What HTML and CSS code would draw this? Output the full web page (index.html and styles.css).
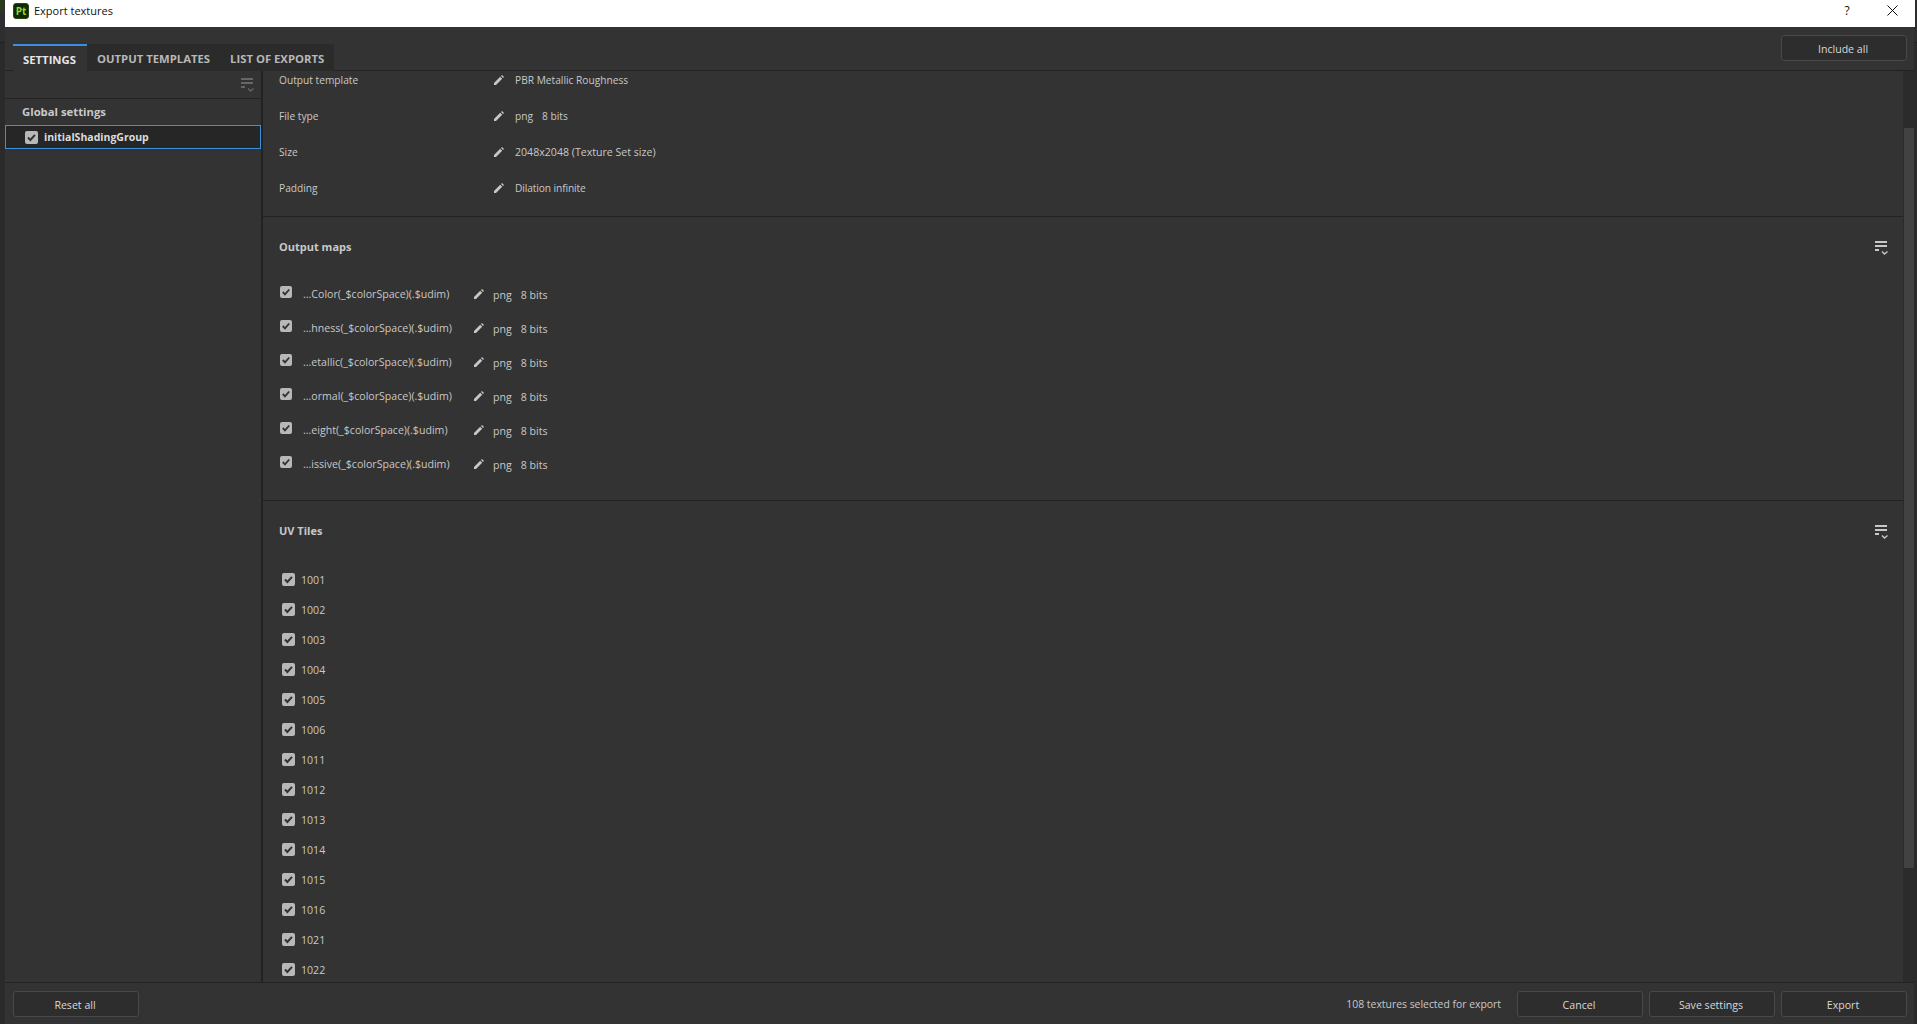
FILE: index.html
```html
<!DOCTYPE html>
<html lang="en">
<head>
<meta charset="utf-8">
<title>Export textures</title>
<link rel="stylesheet" href="styles.css">
</head>
<body>
<svg width="0" height="0" class="defs">
  <symbol id="pencil" viewBox="0 0 10 10"><path d="M0 10V8L6.2 1.8 8.2 3.8 2 10ZM7 1 8 0 10 2 9 3Z" fill="#c8c8c8"/></symbol>
  <symbol id="check" viewBox="0 0 13 13"><path d="M3 6.5 5.4 9 10 3.8" fill="none" stroke="#333" stroke-width="2"/></symbol>
  <symbol id="filter" viewBox="0 0 14 14"><path d="M0 0H12V2H0ZM0 4H12V6H0ZM0 8H4V10H0Z" fill="currentColor"/><path d="M7 10.5 9.5 13 12.5 10.5" fill="none" stroke="currentColor" stroke-width="1.4"/></symbol>
</svg>
<div class="edge-mark"></div>
<div class="window">
  <header class="titlebar">
    <div class="logo">Pt</div>
    <div class="title">Export textures</div>
    <div class="help">?</div>
    <svg class="close" width="11" height="11" viewBox="0 0 11 11"><path d="M.5.5 10.5 10.5M10.5.5.5 10.5" stroke="#111" fill="none"/></svg>
  </header>
  <div class="tabbar">
    <div class="tabs">
      <div class="tab active">SETTINGS</div>
      <div class="tab">OUTPUT TEMPLATES</div>
      <div class="tab">LIST OF EXPORTS</div>
    </div>
    <button class="btn include">Include all</button>
  </div>
  <div class="main">
    <aside class="sidebar">
      <div class="side-tools"><svg class="filter dim"><use href="#filter"/></svg></div>
      <div class="global">Global settings</div>
      <div class="set-row"><span class="cb"><svg><use href="#check"/></svg></span><span>initialShadingGroup</span></div>
    </aside>
    <section class="content">
      <div class="scroll-area">
        <div class="general">
          <div class="prop"><span class="prop-label">Output template</span><svg class="pencil"><use href="#pencil"/></svg><span>PBR Metallic Roughness</span></div>
          <div class="prop"><span class="prop-label">File type</span><svg class="pencil"><use href="#pencil"/></svg><span>png</span><span class="bits">8 bits</span></div>
          <div class="prop"><span class="prop-label">Size</span><svg class="pencil"><use href="#pencil"/></svg><span class="wide">2048x2048 (Texture Set size)</span></div>
          <div class="prop"><span class="prop-label">Padding</span><svg class="pencil"><use href="#pencil"/></svg><span class="tight">Dilation infinite</span></div>
        </div>
        <div class="block maps">
          <div class="block-head"><h2>Output maps</h2><svg class="filter"><use href="#filter"/></svg></div>
          <div class="map"><span class="cb small"><svg><use href="#check"/></svg></span><span class="map-name">...Color(_$colorSpace)(.$udim)</span><svg class="pencil"><use href="#pencil"/></svg><span class="low">png</span><span class="bits low">8 bits</span></div>
          <div class="map"><span class="cb small"><svg><use href="#check"/></svg></span><span class="map-name">...hness(_$colorSpace)(.$udim)</span><svg class="pencil"><use href="#pencil"/></svg><span class="low">png</span><span class="bits low">8 bits</span></div>
          <div class="map"><span class="cb small"><svg><use href="#check"/></svg></span><span class="map-name">...etallic(_$colorSpace)(.$udim)</span><svg class="pencil"><use href="#pencil"/></svg><span class="low">png</span><span class="bits low">8 bits</span></div>
          <div class="map"><span class="cb small"><svg><use href="#check"/></svg></span><span class="map-name">...ormal(_$colorSpace)(.$udim)</span><svg class="pencil"><use href="#pencil"/></svg><span class="low">png</span><span class="bits low">8 bits</span></div>
          <div class="map"><span class="cb small"><svg><use href="#check"/></svg></span><span class="map-name">...eight(_$colorSpace)(.$udim)</span><svg class="pencil"><use href="#pencil"/></svg><span class="low">png</span><span class="bits low">8 bits</span></div>
          <div class="map"><span class="cb small"><svg><use href="#check"/></svg></span><span class="map-name">...issive(_$colorSpace)(.$udim)</span><svg class="pencil"><use href="#pencil"/></svg><span class="low">png</span><span class="bits low">8 bits</span></div>
        </div>
        <div class="block tiles">
          <div class="block-head"><h2>UV Tiles</h2><svg class="filter"><use href="#filter"/></svg></div>
          <div class="tile"><span class="cb"><svg><use href="#check"/></svg></span><span>1001</span></div>
          <div class="tile"><span class="cb"><svg><use href="#check"/></svg></span><span>1002</span></div>
          <div class="tile"><span class="cb"><svg><use href="#check"/></svg></span><span>1003</span></div>
          <div class="tile"><span class="cb"><svg><use href="#check"/></svg></span><span>1004</span></div>
          <div class="tile"><span class="cb"><svg><use href="#check"/></svg></span><span>1005</span></div>
          <div class="tile"><span class="cb"><svg><use href="#check"/></svg></span><span>1006</span></div>
          <div class="tile"><span class="cb"><svg><use href="#check"/></svg></span><span>1011</span></div>
          <div class="tile"><span class="cb"><svg><use href="#check"/></svg></span><span>1012</span></div>
          <div class="tile"><span class="cb"><svg><use href="#check"/></svg></span><span>1013</span></div>
          <div class="tile"><span class="cb"><svg><use href="#check"/></svg></span><span>1014</span></div>
          <div class="tile"><span class="cb"><svg><use href="#check"/></svg></span><span>1015</span></div>
          <div class="tile"><span class="cb"><svg><use href="#check"/></svg></span><span>1016</span></div>
          <div class="tile"><span class="cb"><svg><use href="#check"/></svg></span><span>1021</span></div>
          <div class="tile"><span class="cb"><svg><use href="#check"/></svg></span><span>1022</span></div>
        </div>
      </div>
      <div class="scrollbar"><div class="thumb"></div></div>
    </section>
  </div>
  <footer class="footer">
    <button class="btn">Reset all</button>
    <span class="status">108 textures selected for export</span>
    <button class="btn">Cancel</button>
    <button class="btn">Save settings</button>
    <button class="btn">Export</button>
  </footer>
</div>
</body>
</html>
```
FILE: styles.css
```css
* { box-sizing: border-box; }
html, body { margin: 0; height: 100%; overflow: hidden; }
body { background: linear-gradient(#2e2e2e 42px, #1f1f1f 42px, #1f1f1f 43px, #2a2a2a 43px); font: 10.4px/14px "Open Sans", "Noto Sans", sans-serif; color: #c8c8c8; padding: 0 3px 0 5px; }
.defs { position: absolute; }
.edge-mark { position: absolute; left: 0; top: 0; width: 4px; height: 12px; background: #2a3a1a; }
.window { height: 1024px; display: flex; flex-direction: column; background: #333; }
.titlebar { height: 27px; flex: none; background: #fff; color: #111; display: flex; align-items: flex-start; padding: 3px 0 0 8px; font-size: 11px; margin-right: -1px; }
.logo { width: 16px; height: 16px; border-radius: 3px; background: #0f2a04; border: 1px solid #2c4a10; color: #8fdc2e; font: 700 10px/14px "Open Sans", sans-serif; text-align: center; margin-right: 5px; }
.title { flex: 1; line-height: 16px; }
.help { font-size: 12px; line-height: 16px; width: 12px; text-align: center; margin-right: 34px; }
.close { margin: 2px 17px 0 0; }
.tabbar { height: 44px; flex: none; display: flex; align-items: flex-end; justify-content: space-between; padding: 0 7px 0 8px; border-bottom: 1px solid #222; position: relative; }
.tabs { display: flex; height: 27px; background: #2b2b2b; margin-bottom: -1px; }
.tab { padding: 0 10px; font-weight: 700; line-height: 29px; color: #b8b8b8; font-size: 11.3px; }
.tab.active { width: 74px; padding: 0 10px; white-space: nowrap; background: #333; border-top: 2px solid #3c8fdc; line-height: 28px; color: #e6e6e6; }
.btn { width: 126px; height: 26px; background: #2d2d2d; border: 1px solid #484848; border-radius: 3px; color: #d8d8d8; font: 10.6px/14px "Open Sans", "Noto Sans", sans-serif; padding: 1px 2px 0 0; }
.include { margin-top: 8px; align-self: flex-start; }
.main { flex: 1; min-height: 0; display: flex; }
.sidebar { width: 258px; flex: none; border-right: 2px solid #222; }
.side-tools { height: 28px; border-bottom: 1px solid #222; display: flex; justify-content: flex-end; align-items: center; padding-right: 6px; }
.filter { width: 14px; height: 14px; color: #c8c8c8; flex: none; }
.filter.dim { color: #666; }
.global { font-weight: 700; font-size: 11.3px; padding: 6px 0 0 17px; height: 26px; line-height: 14px; color: #c8c8c8; }
.set-row { height: 24px; background: #262626; border: 1px solid #3c8fdc; display: flex; align-items: center; padding-left: 19px; gap: 6px; font-weight: 700; font-size: 10.5px; color: #dcdcdc; }
.cb { width: 13px; height: 13px; flex: none; background: #b8b8b8; border-radius: 2px; display: block; }
.cb svg { display: block; width: 100%; height: 100%; }
.cb.small { width: 12px; height: 12px; margin-bottom: 4px; }
.content { flex: 1; min-width: 0; display: flex; }
.scroll-area { flex: 1; min-width: 0; overflow: hidden; }
.scrollbar { width: 11px; flex: none; background: #2b2b2b; padding: 57px 0 0 1px; }
.thumb { height: 740px; background: #424242; }
.general { height: 146px; border-bottom: 1px solid #222; overflow: hidden; }
.prop { height: 36px; display: flex; align-items: center; padding-left: 16px; font-size: 10.2px; }
.prop:first-child { margin-top: -9px; }
.prop-label { width: 215px; }
.wide { font-size: 10.6px; }
.tight { letter-spacing: -.1px; }
.pencil { width: 10px; height: 10px; margin-right: 11px; flex: none; }
.bits { margin-left: 9px; }
.block { border-bottom: 1px solid #222; }
.maps { height: 284px; }
.block-head { height: 60px; display: flex; align-items: center; justify-content: space-between; padding: 0 14px 0 16px; }
.block-head h2 { font: 700 11px/14px "Open Sans", "Noto Sans", sans-serif; margin: 0; color: #c8c8c8; }
.maps .block-head .filter { margin-top: 2px; }
.tiles .block-head { height: 64px; }
.tiles .block-head h2 { margin-bottom: 4px; }
.tiles .block-head .filter { margin-bottom: 2px; }
.map { height: 34px; display: flex; align-items: center; padding-left: 17px; font-size: 10.6px; }
.map-name { width: 183px; padding-left: 11px; }
.map .pencil { margin: 0 9px 0 -1px; }
.map .low:first-of-type { margin-left: 1px; }
.low { position: relative; top: 1px; }
.tiles { border-bottom: 0; }
.tile { height: 30px; display: flex; align-items: center; padding-left: 19px; gap: 6px; font-size: 10.6px; }
.tile .cb { margin-bottom: 2px; }
.footer { height: 42px; flex: none; border-top: 1px solid #222; display: flex; align-items: center; gap: 6px; padding: 1px 7px 0 8px; }
.status { margin-left: auto; margin-right: 10px; }
```
